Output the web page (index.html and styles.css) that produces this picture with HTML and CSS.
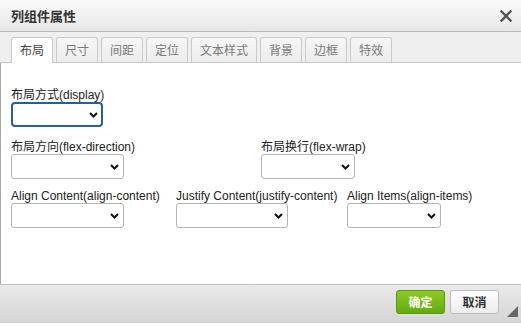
FILE: index.html
```html
<!DOCTYPE html>
<html lang="zh">
<head>
<meta charset="utf-8">
<title>列组件属性</title>
<link rel="stylesheet" href="styles.css">
</head>
<body>
<div class="dialog">
  <div class="header">
    <span class="title">列组件属性</span>
    <svg class="close" width="14" height="14" viewBox="0 0 14 14"><path d="M2.5 2.5 L11.5 11.5 M11.5 2.5 L2.5 11.5" stroke="#555" stroke-width="2.4" stroke-linecap="square"/></svg>
  </div>
  <div class="tabs">
    <div class="tab active">布局</div>
    <div class="tab">尺寸</div>
    <div class="tab">间距</div>
    <div class="tab">定位</div>
    <div class="tab">文本样式</div>
    <div class="tab">背景</div>
    <div class="tab">边框</div>
    <div class="tab">特效</div>
  </div>
  <div class="content">
    <div class="row row1">
      <div class="field">
        <label class="label">布局方式(display)</label>
        <div class="sel w92 focused"><select></select><svg class="chev" width="9" height="6" viewBox="0 0 9 6"><path d="M1 1 L4.5 4.5 L8 1" fill="none" stroke="#111" stroke-width="2"/></svg></div>
      </div>
    </div>
    <div class="row row2">
      <div class="field col250">
        <label class="label">布局方向(flex-direction)</label>
        <div class="sel w113"><select></select><svg class="chev" width="9" height="6" viewBox="0 0 9 6"><path d="M1 1 L4.5 4.5 L8 1" fill="none" stroke="#111" stroke-width="2"/></svg></div>
      </div>
      <div class="field">
        <label class="label">布局换行(flex-wrap)</label>
        <div class="sel w94"><select></select><svg class="chev" width="9" height="6" viewBox="0 0 9 6"><path d="M1 1 L4.5 4.5 L8 1" fill="none" stroke="#111" stroke-width="2"/></svg></div>
      </div>
    </div>
    <div class="row row3">
      <div class="field col165">
        <label class="label">Align Content(align-content)</label>
        <div class="sel w113"><select></select><svg class="chev" width="9" height="6" viewBox="0 0 9 6"><path d="M1 1 L4.5 4.5 L8 1" fill="none" stroke="#111" stroke-width="2"/></svg></div>
      </div>
      <div class="field col171">
        <label class="label">Justify Content(justify-content)</label>
        <div class="sel w112"><select></select><svg class="chev" width="9" height="6" viewBox="0 0 9 6"><path d="M1 1 L4.5 4.5 L8 1" fill="none" stroke="#111" stroke-width="2"/></svg></div>
      </div>
      <div class="field">
        <label class="label">Align Items(align-items)</label>
        <div class="sel w94"><select></select><svg class="chev" width="9" height="6" viewBox="0 0 9 6"><path d="M1 1 L4.5 4.5 L8 1" fill="none" stroke="#111" stroke-width="2"/></svg></div>
      </div>
    </div>
  </div>
  <div class="footer">
    <button class="btn ok">确定</button>
    <button class="btn cancel">取消</button>
    <svg class="grip" width="11" height="11" viewBox="0 0 11 11"><path d="M11 0 L11 11 L0 11 Z" fill="#666"/></svg>
  </div>
</div>
</body>
</html>
```

FILE: styles.css
```css
html, body {
  margin: 0;
  padding: 0;
  background: #fff;
}
body {
  width: 521px;
  height: 326px;
  overflow: hidden;
  font-family: "Liberation Sans", Arial, "Noto Sans CJK SC", sans-serif;
  font-size: 12px;
  color: #333;
}
.dialog {
  display: flex;
  flex-direction: column;
  height: 323px;
}
.header {
  height: 31px;
  border-bottom: 1px solid #b9b9b9;
  background: linear-gradient(#fbfbfb, #e7e7e7);
  display: flex;
  align-items: center;
  justify-content: space-between;
  padding: 0 8px 0 11px;
  flex: none;
}
.title {
  font-family: "Noto Sans CJK SC", sans-serif;
  font-weight: bold;
  font-size: 13px;
  color: #333;
}
.close {
  display: block;
}
.tabs {
  flex: none;
  height: 25px;
  padding: 5px 0 0 11px;
  background: #efefef;
  border-bottom: 1px solid #c9c9c9;
  display: flex;
  gap: 3px;
  align-items: flex-end;
}
.tab {
  height: 24px;
  line-height: 24px;
  padding: 0 8px;
  border: 1px solid #cacaca;
  border-bottom: none;
  border-radius: 3px 3px 0 0;
  background: linear-gradient(#f6f6f6, #ececec);
  font-family: "Noto Sans CJK SC", sans-serif;
  font-size: 12px;
  color: #7a7a7a;
}
.tab.active {
  background: #fff;
  color: #444;
  height: 25px;
  margin-bottom: -1px;
}
.content {
  flex: 1;
  border-left: 1px solid #a8a8a8;
  padding: 25px 10px 0 10px;
  display: flex;
  flex-direction: column;
}
.row {
  display: flex;
}
.row2 {
  margin-top: 13px;
}
.row3 {
  margin-top: 10px;
}
.field {
  display: flex;
  flex-direction: column;
  align-items: flex-start;
}
.col250 { width: 250px; }
.col165 { width: 165px; }
.col171 { width: 171px; }
.label {
  display: block;
  height: 14px;
  line-height: 14px;
  font-size: 12px;
  color: #222;
  white-space: nowrap;
}
.sel {
  position: relative;
  height: 25px;
}
.sel select {
  appearance: none;
  -webkit-appearance: none;
  width: 100%;
  height: 25px;
  margin: 0;
  border: 1px solid #b4b4b4;
  border-radius: 3px;
  background: #fff;
  box-sizing: border-box;
}
.sel.focused select {
  border: 2px solid #2c5f8e;
  border-radius: 4px;
}
.chev {
  position: absolute;
  right: 5px;
  top: 10px;
  pointer-events: none;
}
.w92 { width: 92px; }
.w94 { width: 94px; }
.w112 { width: 112px; }
.w113 { width: 113px; }
.footer {
  flex: none;
  border-top: 1px solid #c2c2c2;
  border-bottom: 1px solid #cfcfcf;
  background: linear-gradient(#e9e9e9, #d6d6d6);
  display: flex;
  justify-content: flex-end;
  align-items: flex-start;
  padding: 5px 22px 0 0;
  box-sizing: border-box;
  height: 39px;
  gap: 5px;
  position: relative;
}
.btn {
  width: 49px;
  height: 24px;
  padding: 0;
  border-radius: 3px;
  font-family: "Noto Sans CJK SC", sans-serif;
  font-weight: bold;
  font-size: 12px;
  line-height: 22px;
}
.ok {
  border: 1px solid #5b9a10;
  background: linear-gradient(#8dcb22, #65aa10);
  color: #fff;
}
.cancel {
  border: 1px solid #bdbdbd;
  background: linear-gradient(#ffffff, #ececec);
  color: #333;
}
.grip {
  position: absolute;
  right: 3px;
  bottom: 5px;
}
```
